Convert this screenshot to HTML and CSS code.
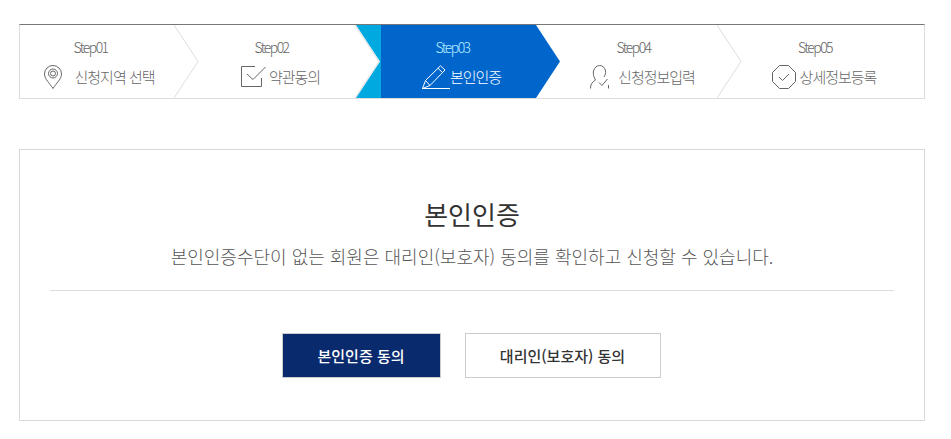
FILE: index.html
```html
<!DOCTYPE html>
<html lang="ko">
<head>
<meta charset="utf-8">
<title>본인인증</title>
<link rel="stylesheet" href="styles.css">
</head>
<body>
<ol class="steps">
  <li class="step">
    <span class="step-no">Step01</span>
    <span class="step-label gap-pin">
      <svg class="icon" width="18" height="24" viewBox="0 0 18 24"><path d="M9 23.500C5.500 18 .5 14 .5 9a8.500 8.500 0 0 1 17 0C17.500 14 12.500 18 9 23.500Z"/><circle cx="9" cy="8.500" r="4.500"/><circle cx="9" cy="8.500" r="2.500"/></svg>
      <span>신청지역 선택</span>
    </span>
    <svg class="chevron" width="25" height="73" viewBox="0 0 25 73"><path d="M0 0L24 36.500L0 73"/></svg>
  </li>
  <li class="step">
    <span class="step-no">Step02</span>
    <span class="step-label gap-check">
      <svg class="icon" width="25" height="21" viewBox="0 0 25 21"><path d="M20.500 12V20.500H.5V.5H14"/><path d="M6 8L12 13.500L24.500 1"/></svg>
      <span>약관동의</span>
    </span>
    <svg class="chevron" width="25" height="73" viewBox="0 0 25 73"><path d="M0 0L24 36.500L0 73"/></svg>
  </li>
  <li class="step step-active">
    <span class="step-no">Step03</span>
    <span class="step-label gap-pen">
      <svg class="icon icon-light" width="28" height="24" viewBox="0 0 28 24"><path d="M0 23.500H28"/><path d="M.5 23.500L3.500 15.500L18.500 .8L23 5L8 20.500Z"/><path d="M3.500 15.500L8 20.500M16 3.300L20.500 7.500"/></svg>
      <span>본인인증</span>
    </span>
  </li>
  <li class="step">
    <span class="step-no">Step04</span>
    <span class="step-label gap-user">
      <svg class="icon" width="19" height="24" viewBox="0 0 19 24"><path d="M.5 23.500C.5 19.500 2 17 5.500 15C3.500 12 3 9 3.500 6C4.500 2.500 7 .5 9.500 .5C12.500 .5 15 2.500 15.500 6C15.800 8 15.300 10 14 12"/><path d="M9 17.500L12 20.500L17.500 14"/><path d="M18.500 23.500V20"/></svg>
      <span>신청정보입력</span>
    </span>
    <svg class="chevron" width="25" height="73" viewBox="0 0 25 73"><path d="M0 0L24 36.500L0 73"/></svg>
  </li>
  <li class="step">
    <span class="step-no">Step05</span>
    <span class="step-label gap-badge">
      <svg class="icon" width="24" height="24" viewBox="0 0 24 24"><path d="M7.500 .5H16.500L23.500 7.500V16.500L16.500 23.500H7.500L.5 16.500V7.500Z"/><path d="M7 12L10.500 15.500L17 9"/></svg>
      <span>상세정보등록</span>
    </span>
  </li>
</ol>
<section class="card">
  <h1 class="card-title">본인인증</h1>
  <p class="card-text">본인인증수단이 없는 회원은 대리인(보호자) 동의를 확인하고 신청할 수 있습니다.</p>
  <div class="actions">
    <a class="btn btn-primary" href="#">본인인증 동의</a>
    <a class="btn btn-outline" href="#">대리인(보호자) 동의</a>
  </div>
</section>
</body>
</html>
```
FILE: styles.css
```css
* { box-sizing: border-box; }
html, body { margin: 0; padding: 0; background: #fff; }
body {
  padding: 24px 26px 0 19px;
  font-family: "Noto Sans CJK KR", "Noto Sans", sans-serif;
  color: #333;
}
.steps {
  list-style: none;
  margin: 0;
  padding: 0;
  height: 75px;
  display: grid;
  grid-template-columns: repeat(4, 181px) 182px;
  border-top: 1px solid #777;
  border-bottom: 1px solid #ddd;
  border-left: 1px solid #ddd;
  border-right: 1px solid #ddd;
}
.step {
  position: relative;
  margin-left: -1px;
  padding: 13px 37px 0 0;
  display: flex;
  flex-direction: column;
  align-items: center;
  color: #666;
}
.step-no {
  margin-right: 2px;
  font-size: 14px;
  line-height: 18px;
  font-weight: 300;
  letter-spacing: -1.6px;
}
.step-label {
  display: flex;
  align-items: center;
  margin: 7px 0 0 16px;
  height: 27px;
  font-size: 15px;
  font-weight: 300;
  letter-spacing: -1px;
  white-space: nowrap;
}
.gap-pin { gap: 12px; }
.gap-check { gap: 3px; }
.gap-pen { gap: 0; }
.gap-user { gap: 9px; }
.gap-badge { gap: 4px; }
.icon { flex: none; fill: none; stroke: #666; stroke-width: 1; }
.icon-light { stroke: #fff; }
.chevron {
  position: absolute;
  top: 0;
  left: 155px;
  fill: none;
  stroke: #ddd;
  stroke-width: 1;
  z-index: 1;
}
.step-active { color: #fff; }
.step-active::after {
  content: "";
  position: absolute;
  inset: 0;
  background: #0066cc;
  clip-path: polygon(0 0, 155px 0, 179px 50%, 155px 100%, 0 100%);
  z-index: 0;
}
.step-active::before {
  content: "";
  position: absolute;
  top: 0;
  bottom: 0;
  left: -25px;
  width: 25px;
  background: #00a9e0;
  clip-path: polygon(0 0, 100% 0, 100% 100%, 0 100%, 24px 50%);
}
.step-active > * { position: relative; z-index: 1; }
.step-active .step-no { color: #b5ecff; }
.card {
  margin-top: 50px;
  height: 272px;
  border: 1px solid #d9d9d9;
  padding: 44px 30px 0;
  text-align: center;
}
.card-title {
  margin: 0;
  font-size: 26px;
  line-height: 40px;
  font-weight: 400;
  color: #333;
}
.card-text {
  margin: 9px 0 0;
  padding-bottom: 21px;
  border-bottom: 1px solid #ddd;
  font-size: 18px;
  line-height: 26px;
  font-weight: 300;
  color: #555;
}
.actions {
  display: flex;
  justify-content: center;
  gap: 24px;
  margin-top: 42px;
  padding-right: 2px;
}
.btn {
  display: flex;
  align-items: center;
  justify-content: center;
  height: 45px;
  font-size: 15px;
  font-weight: 500;
  text-decoration: none;
  border: 1px solid #ccc;
}
.btn-primary { width: 159px; background: #0a2a6e; color: #fff; }
.btn-outline { width: 196px; background: #fff; color: #333; }
```
